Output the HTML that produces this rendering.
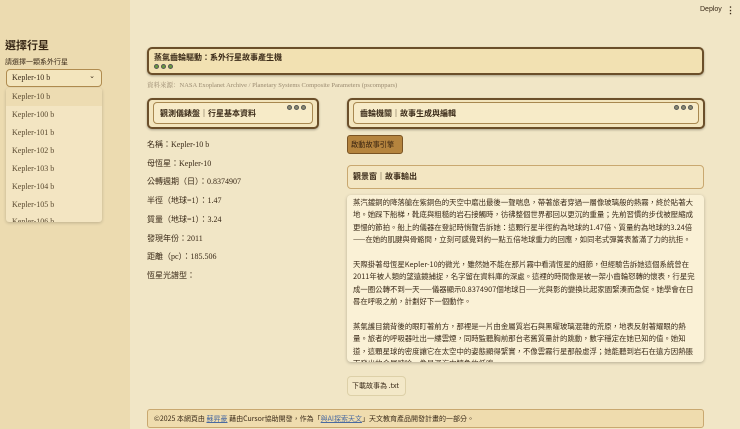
<!DOCTYPE html><html><head><meta charset="utf-8"><style>
*{box-sizing:border-box;margin:0;padding:0}
body{width:740px;height:429px;overflow:hidden;background:#f1e6c6;font-family:"Liberation Serif","Noto Serif CJK SC","Noto Sans CJK TC",serif;color:#3a2a18;position:relative;font-size:8px}
.sb{position:absolute;left:0;top:0;width:130px;height:429px;background:#ecdbb0}
.abs{position:absolute;white-space:nowrap}
.box{position:absolute;background:#f3e5bd;border:2px solid #6b4f2a;border-radius:5px;box-shadow:0 1px 2px rgba(0,0,0,.3)}
.inner{position:absolute;border:1px solid #a88850;border-radius:4px;background:#f7ebc8}
.h{font-family:"Noto Sans CJK TC",sans-serif;font-weight:700;font-size:8px}
.dots{position:absolute;font-size:0}
.dots i{display:inline-block;width:5px;height:5px;border-radius:50%;background:#8a8a70;border:1px solid #555;margin-right:2px}
.item{position:absolute;left:12px;font-size:8px;color:#5a4a30}
</style></head><body>
<div class="sb"></div>
<div class="abs" style="left:700px;top:6px;font-size:7px;font-family:'Liberation Sans',sans-serif">Deploy</div>
<div class="abs" style="left:726px;top:5px;font-size:9px;font-weight:bold">⋮</div>
<div class="abs h" style="left:5px;top:37px;font-size:11px">選擇行星</div>
<div class="abs" style="left:5px;top:57px;font-size:7px;font-family:'Noto Sans CJK TC',sans-serif">請選擇一顆系外行星</div>
<div class="abs" style="left:6px;top:69px;width:96px;height:18px;border:1px solid #b08c50;border-radius:4px;background:#f3e5bd;padding:3px 5px;font-size:8px">Kepler-10 b<span style="position:absolute;right:6px;top:2px;font-size:7px">⌄</span></div>
<div class="abs" style="left:6px;top:88px;width:96px;height:134px;background:#f3e5c2;border-radius:3px;box-shadow:0 1px 3px rgba(0,0,0,.2);overflow:hidden">
<div style="height:18px;background:#eddcb2"></div></div>
<div class="item" style="top:92px">Kepler-10 b</div>
<div class="item" style="top:110px">Kepler-100 b</div>
<div class="item" style="top:128px">Kepler-101 b</div>
<div class="item" style="top:146px">Kepler-102 b</div>
<div class="item" style="top:164px">Kepler-103 b</div>
<div class="item" style="top:182px">Kepler-104 b</div>
<div class="item" style="top:200px">Kepler-105 b</div>
<div class="item" style="top:217px;height:5px;overflow:hidden">Kepler-106 b</div>

<div class="box" style="left:147px;top:47px;width:557px;height:28px;background:#f2e1b2"></div>
<div class="abs h" style="left:154px;top:52px">蒸氣齒輪驅動：系外行星故事產生機</div>
<div class="dots" style="left:154px;top:64px"><i style="background:#6a9a40"></i><i style="background:#6a9a40"></i><i style="background:#6a9a40"></i></div>
<div class="abs" style="left:147px;top:80px;font-size:6.5px;color:#9a8a70">資料來源：NASA Exoplanet Archive / Planetary Systems Composite Parameters (pscomppars)</div>

<div class="box" style="left:147px;top:98px;width:172px;height:31px"></div>
<div class="inner" style="left:153px;top:102px;width:160px;height:22px"></div>
<div class="abs h" style="left:160px;top:108px">觀測儀錶盤｜行星基本資料</div>
<div class="dots" style="left:287px;top:105px"><i></i><i></i><i></i></div>
<div class="box" style="left:347px;top:98px;width:358px;height:31px"></div>
<div class="inner" style="left:353px;top:102px;width:346px;height:22px"></div>
<div class="abs h" style="left:360px;top:108px">齒輪機關｜故事生成與編輯</div>
<div class="dots" style="left:674px;top:105px"><i></i><i></i><i></i></div>

<div class="abs" style="left:147px;top:136px;line-height:18.7px;font-size:8px;font-family:'Liberation Serif','Noto Sans CJK TC',serif">名稱：Kepler-10 b<br>母恆星：Kepler-10<br>公轉週期（日）：0.8374907<br>半徑（地球=1）：1.47<br>質量（地球=1）：3.24<br>發現年份：2011<br>距離（pc）：185.506<br>恆星光譜型：</div>

<div class="abs" style="left:347px;top:135px;width:56px;height:19px;background:#b5843e;border:1px solid #7a5424;border-radius:3px;font-size:7.2px;padding:4px 3px;color:#3a2410;font-family:'Noto Sans CJK TC',sans-serif;overflow:hidden">啟動故事引擎</div>

<div class="abs" style="left:347px;top:165px;width:357px;height:24px;border:1px solid #c9a870;border-radius:4px;background:#f3e6c2"></div>
<div class="abs h" style="left:353px;top:171px">觀景窗｜故事輸出</div>

<div class="abs" style="white-space:normal;left:347px;top:195px;width:357px;height:167px;background:#faf1d6;border-radius:4px;box-shadow:0 1px 3px rgba(0,0,0,.25);overflow:hidden;padding:2px 6px;font-size:7.4px;line-height:12.4px;font-family:'Noto Sans CJK TC',sans-serif;color:#3a2a18">
<p>蒸汽鍍銅的降落艙在紫銅色的天空中磨出最後一聲喘息，帶著旅者穿過一層像玻璃般的熱霧，終於貼著大地。她踩下船梯，靴底與粗糙的岩石接觸時，彷彿整個世界都回以更沉的重量；先前習慣的步伐被壓縮成更慢的節拍。船上的儀器在登記時悄聲告訴她：這顆行星半徑約為地球的1.47倍、質量約為地球的3.24倍——在她的肌腱與骨骼間，立刻可感覺到約一點五倍地球重力的回應，如同老式彈簧表蓄滿了力的抗拒。</p><br>
<p>天際掛著母恆星Kepler-10的微光，雖然她不能在那片霧中看清恆星的細節，但經驗告訴她這個系統曾在2011年被人類的望遠鏡捕捉，名字留在資料庫的深處。這裡的時間像是被一架小齒輪怒轉的懷表，行星完成一圈公轉不到一天——儀器顯示0.8374907個地球日——光與影的變換比起家園緊湊而急促。她學會在日晷在呼吸之前，計劃好下一個動作。</p><br>
<p>蒸氣護目鏡背後的眼盯著前方，那裡是一片由金屬質岩石與黑曜玻璃混雜的荒原，地表反射著耀眼的熱量。旅者的呼吸器吐出一縷雲煙，同時監聽胸前那台老舊質量計的跳動，數字穩定在她已知的值。她知道，這顆星球的密度讓它在太空中的姿態顯得緊實，不像雲霧行星那般虛浮；她能聽到岩石在遠方因熱脹而發出的金屬呻吟，像是深海中鯨魚的低鳴。</p><br>
<p>步行不久，她來到一座半沉半浮的蒸汽城遺蹟，銅板與黃金齒輪黏在一起，像是古人拼湊出的心臟。城牆的斑駁之處仍透露著過往的輝煌，遺跡深處的齒輪仍在緩緩轉動。</p></div>

<div class="abs" style="left:347px;top:376px;width:59px;height:20px;border:1px solid #ddd0a8;border-radius:4px;background:#f3e8c8;font-size:7px;padding:4px 4px;font-family:'Noto Sans CJK TC',sans-serif">下載故事為 .txt</div>

<div class="abs" style="left:147px;top:409px;width:557px;height:19px;border:1px solid #c9a870;border-radius:3px;background:#efdcae;font-size:7px;padding:4px 6px;font-family:'Noto Sans CJK TC',sans-serif">©2025 本網頁由 <u style="color:#4a6aa0">蘇昇豪</u> 藉由Cursor協助開發，作為「<u style="color:#4a6aa0">與AI探索天文</u>」天文教育產品開發計畫的一部分。</div>
</body></html>
